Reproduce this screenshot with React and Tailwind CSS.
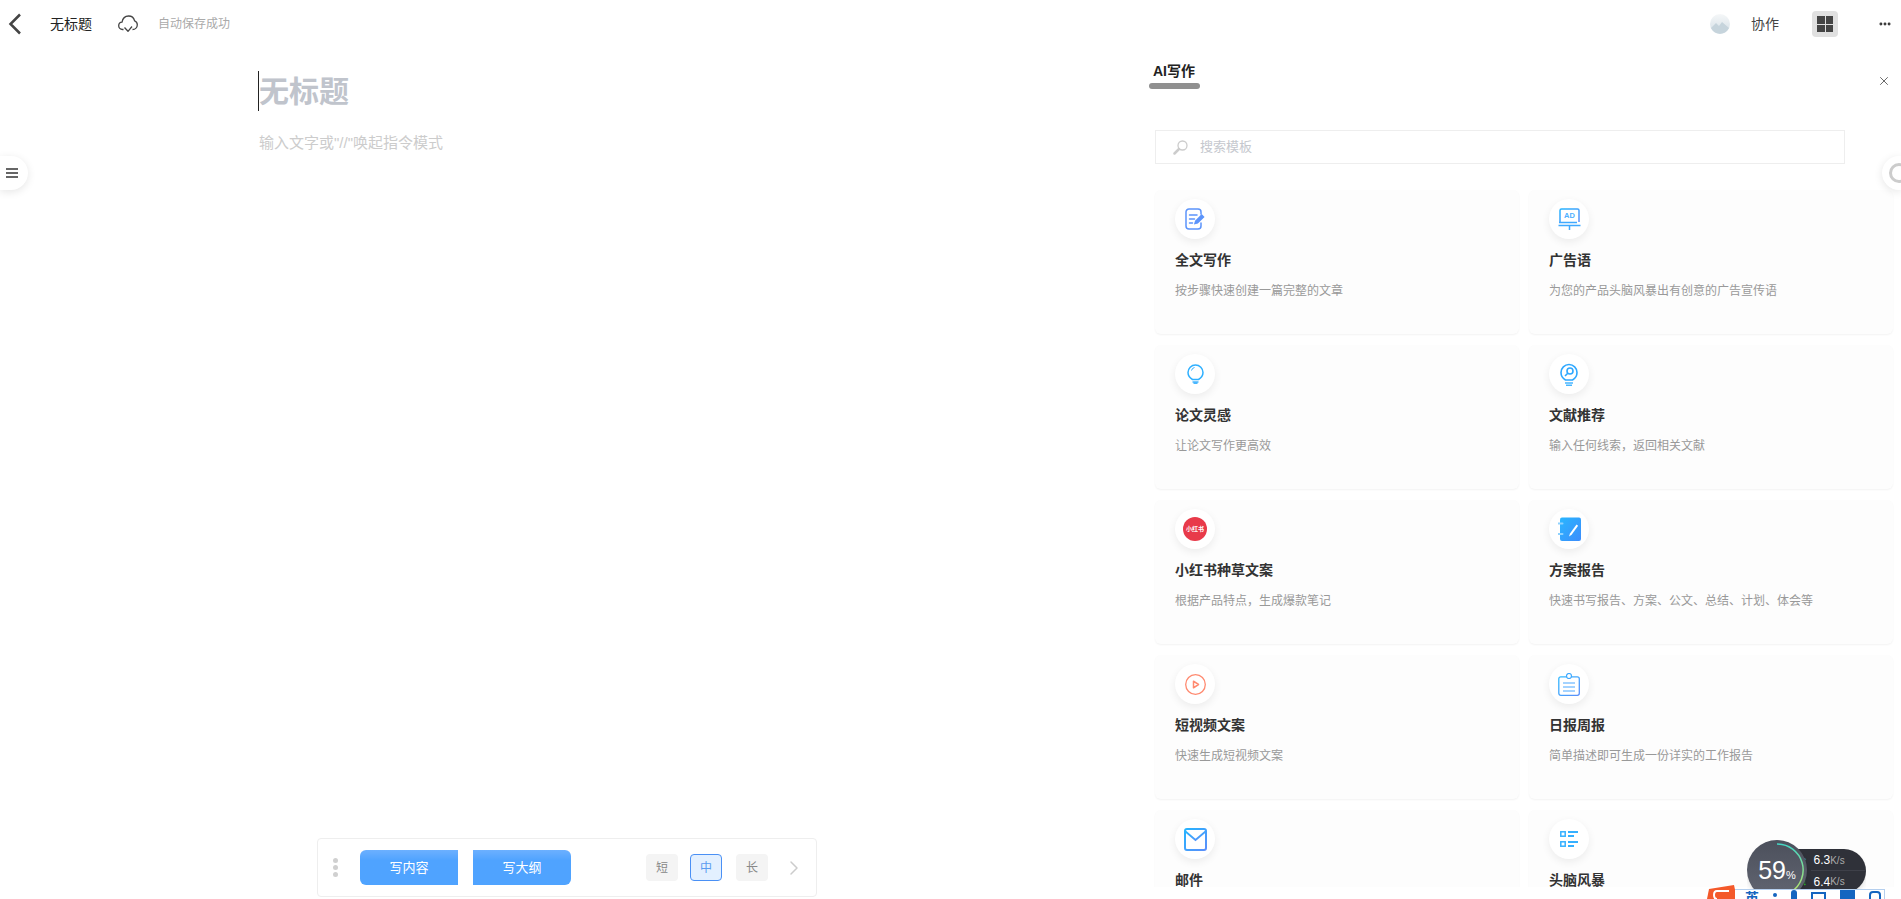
import { X, ChevronRight, MoreHorizontal } from "lucide-react";

const cards = [
  { id: "doc", title: "全文写作", desc: "按步骤快速创建一篇完整的文章" },
  { id: "ad", title: "广告语", desc: "为您的产品头脑风暴出有创意的广告宣传语" },
  { id: "bulb", title: "论文灵感", desc: "让论文写作更高效" },
  { id: "search", title: "文献推荐", desc: "输入任何线索，返回相关文献" },
  { id: "xhs", title: "小红书种草文案", desc: "根据产品特点，生成爆款笔记" },
  { id: "note", title: "方案报告", desc: "快速书写报告、方案、公文、总结、计划、体会等" },
  { id: "play", title: "短视频文案", desc: "快速生成短视频文案" },
  { id: "clip", title: "日报周报", desc: "简单描述即可生成一份详实的工作报告" },
  { id: "mail", title: "邮件", desc: "" },
  { id: "list", title: "头脑风暴", desc: "" },
];

function Grad({ id, from = "#26b4ff", to = "#5b8ffa" }) {
  return (
    <defs>
      <linearGradient id={id} x1="0" y1="0" x2="1" y2="1">
        <stop offset="0" stopColor={from} />
        <stop offset="1" stopColor={to} />
      </linearGradient>
    </defs>
  );
}

function CardIcon({ id }) {
  if (id === "doc")
    return (
      <svg width="20" height="22" viewBox="0 0 20 22" fill="none" stroke="#5c94fb" strokeWidth="1.5" strokeLinecap="round">
        <path d="M16 6V4a3 3 0 0 0-3-3H4a3 3 0 0 0-3 3v14a3 3 0 0 0 3 3h9a3 3 0 0 0 3-3v-3" />
        <path d="M4.5 7h7.5M4.5 11h5M4.5 15h3" />
        <path d="M10 15.5l.7-2.4 6-6 1.8 1.8-6 6z" fill="#5c94fb" />
      </svg>
    );
  if (id === "ad")
    return (
      <svg width="23" height="22" viewBox="0 0 23 22" fill="none">
        <Grad id="g-ad" />
        <path d="M2 14V2.5A1.5 1.5 0 0 1 3.500 1h16A1.500 1.500 0 0 1 21 2.500V14" stroke="url(#g-ad)" strokeWidth="1.500" />
        <path d="M1 14.500h18M0.500 17.500h22M11.500 17.500V22" stroke="#3fa9ff" strokeWidth="1.500" />
        <text x="11.500" y="10" textAnchor="middle" fontSize="7.500" fontWeight="700" fill="#4fb0ff" fontFamily="Liberation Sans">AD</text>
      </svg>
    );
  if (id === "bulb")
    return (
      <svg width="17" height="20" viewBox="0 0 17 20" fill="none" stroke="#2fb0ff" strokeWidth="1.500">
        <path d="M5.500 15.500C3 14 1 11.500 1 8.500a7.500 7.500 0 0 1 15 0c0 3-2 5.500-4.500 7z" />
        <path d="M4.500 6.500A4 4 0 0 1 7.500 3.500" strokeWidth="1" />
        <path d="M5.500 18h6M6.500 19.500h4" stroke="#49b7ff" strokeWidth="1.500" />
      </svg>
    );
  if (id === "search")
    return (
      <svg width="18" height="23" viewBox="0 0 18 23" fill="none" stroke="#2fa8ff" strokeWidth="1.600">
        <path d="M5.500 17C3 15.500 1 13 1 9.500a8 8 0 0 1 16 0c0 3.500-2 6-4.500 7.500z" />
        <circle cx="10" cy="8" r="3" />
        <path d="M7.800 10.200L5 13" />
        <path d="M5 20h8M6 22.200h6" stroke="#49b7ff" />
      </svg>
    );
  if (id === "xhs")
    return (
      <div className="w-6 h-6 rounded-full bg-[#e83a4a] flex items-center justify-center text-white text-[6px] font-bold leading-none whitespace-nowrap">
        小红书
      </div>
    );
  if (id === "note")
    return (
      <svg width="23" height="24" viewBox="0 0 23 24" fill="none">
        <Grad id="g-note" from="#29b6ff" to="#3d8dfc" />
        <rect x="2" y="0.500" width="21" height="23.500" rx="2" fill="url(#g-note)" />
        <path d="M0.500 6.500h4M0.500 17h4" stroke="#8ed2ff" strokeWidth="2" strokeLinecap="round" />
        <path d="M11 19.500l1-3 6.500-9 1.600 1.200-6.500 9z" fill="#fff" />
      </svg>
    );
  if (id === "play")
    return (
      <svg width="21" height="21" viewBox="0 0 21 21" fill="none" stroke="#ff8a70" strokeWidth="1.300">
        <circle cx="10.500" cy="10.500" r="9.800" />
        <path d="M8.500 7.200l5 3.300-5 3.300z" strokeWidth="1.500" strokeLinejoin="round" />
      </svg>
    );
  if (id === "clip")
    return (
      <svg width="22" height="23" viewBox="0 0 22 23" fill="none">
        <Grad id="g-clip" from="#2fb8ff" to="#5b8ffa" />
        <rect x="0.800" y="3.800" width="20.500" height="18.500" rx="2" stroke="url(#g-clip)" strokeWidth="1.300" />
        <path d="M5 10h12M5 14h12M5 18h12" stroke="#4aa8ff" strokeWidth="1.100" />
        <circle cx="11" cy="3" r="2.500" fill="#fff" stroke="#3fa9ff" strokeWidth="1.200" />
      </svg>
    );
  if (id === "mail")
    return (
      <svg width="23" height="23" viewBox="0 0 23 23" fill="none">
        <Grad id="g-mail" />
        <rect x="1" y="1" width="21" height="21" rx="2" stroke="url(#g-mail)" strokeWidth="2" />
        <path d="M1.500 3.500l10 8.500 10-8.500" stroke="url(#g-mail)" strokeWidth="1.800" />
      </svg>
    );
  return (
    <svg width="18" height="16" viewBox="0 0 18 16" fill="none" stroke="#35b0ff">
      <rect x="0.800" y="0.800" width="4.400" height="4.400" strokeWidth="1.500" />
      <rect x="0.800" y="10.800" width="4.400" height="4.400" strokeWidth="1.500" />
      <path d="M8 1h10M8 5h6M8 11h10M8 15h6" strokeWidth="1.800" />
    </svg>
  );
}

function TemplateCard({ id, title, desc }) {
  return (
    <div className="h-[144px] rounded-md bg-[#fdfdfd] pt-[9px] pl-5 shadow-[0_1px_2px_rgba(0,0,0,0.05)]">
      <div className="w-10 h-10 rounded-full bg-white shadow-[0_3px_8px_rgba(0,0,0,0.07)] flex items-center justify-center">
        <CardIcon id={id} />
      </div>
      <div className="mt-[11px] text-sm leading-5 font-bold text-[#333]">{title}</div>
      <div className="mt-[12px] text-xs leading-[18px] text-[#999]">{desc}</div>
    </div>
  );
}

function Header() {
  return (
    <header className="h-12 flex items-center shrink-0">
      <svg className="ml-[8px]" width="14" height="22" viewBox="0 0 14 22" fill="none" stroke="#444" strokeWidth="2.500">
        <path d="M12 1.500L2.500 11l9.500 9.500" />
      </svg>
      <span className="ml-[28px] text-sm text-[#222]">无标题</span>
      <svg className="ml-[26px]" width="20" height="18" viewBox="0 0 20 18" fill="none" stroke="#444" strokeWidth="1.300" strokeLinejoin="round">
        <path d="M5.500 14.500H4.500C2.300 14.500 0.700 12.800 0.700 10.800 0.700 8.800 2.200 7.300 4 7.200 4.600 3.700 7.200 1 10.600 1c3 0 5.300 2 6 4.800 1.500 0.500 2.700 2 2.700 3.900 0 2.600-2 4.800-4.800 4.800" />
        <path d="M6.500 12.500l3.500 3.800 4-4.800" />
      </svg>
      <span className="ml-[20px] text-xs text-[#aaa]">自动保存成功</span>
      <div className="ml-auto flex items-center">
        <svg width="20" height="20" viewBox="0 0 20 20">
          <defs>
            <linearGradient id="g-av" x1="0" y1="0" x2="0" y2="1">
              <stop offset="0" stopColor="#f5f7f8" />
              <stop offset="1" stopColor="#d4dfe6" />
            </linearGradient>
          </defs>
          <circle cx="10" cy="10" r="10" fill="url(#g-av)" />
          <path d="M1 14l5-5 3 3 3-4 7 6a10 10 0 0 1-18 0z" fill="#c6d4dc" />
        </svg>
        <span className="ml-[21px] text-sm text-[#444]">协作</span>
        <div className="ml-[33px] w-[26px] h-[26px] rounded-sm bg-[#e0e0e0] grid grid-cols-2 gap-px p-[5px]">
          <div className="bg-[#444]" />
          <div className="bg-[#444]" />
          <div className="bg-[#444]" />
          <div className="bg-[#444]" />
        </div>
        <MoreHorizontal className="ml-[40px] mr-[9px]" size={14} color="#333" strokeWidth={3} />
      </div>
    </header>
  );
}

function BottomBar() {
  return (
    <div className="absolute left-[317px] top-[838px] w-[500px] h-[59px] bg-white border border-[#eee] rounded-sm flex items-center">
      <div className="ml-[15px] flex flex-col gap-[2px]">
        <span className="w-[5px] h-[5px] rounded-full bg-[#d0d0d0]" />
        <span className="w-[5px] h-[5px] rounded-full bg-[#d0d0d0]" />
        <span className="w-[5px] h-[5px] rounded-full bg-[#d0d0d0]" />
      </div>
      <button className="ml-[22px] w-[98px] h-[35px] rounded-l-md bg-gradient-to-b from-[#6cb0ff] to-[#4fa3ff] to-30% text-[13px] text-white">写内容</button>
      <button className="ml-[15px] w-[98px] h-[35px] rounded-r-md bg-gradient-to-b from-[#6cb0ff] to-[#4fa3ff] to-30% text-[13px] text-white">写大纲</button>
      <button className="ml-[75px] w-8 h-[27px] rounded-sm bg-[#f4f4f4] text-xs text-[#888]">短</button>
      <button className="ml-[12px] w-8 h-[27px] rounded-sm bg-[#e3f0ff] border border-[#4a90f5] text-xs text-[#5a9bf0]">中</button>
      <button className="ml-[14px] w-8 h-[27px] rounded-sm bg-[#f4f4f4] text-xs text-[#888]">长</button>
      <ChevronRight className="ml-[14px]" size={24} color="#ccc" strokeWidth={1.500} />
    </div>
  );
}

function NetWidget() {
  return (
    <div className="absolute left-[1747px] top-[840px] w-[119px] h-[59px] overflow-hidden">
      <div className="absolute left-[30px] top-[9px] w-[89px] h-[44px] rounded-r-full bg-[#2f3139] shadow-md flex flex-col justify-center pl-[34px] text-white">
        <div className="h-[21px] flex items-center border-b border-[#3e4049]">
          <span className="text-[11px] text-[#3aa6f0] mr-[6px] -ml-[9px]">↑</span>
          <span className="text-xs">6.3</span>
          <span className="text-[10px] text-[#aaa]">K/s</span>
        </div>
        <div className="h-[21px] flex items-center">
          <span className="text-[11px] text-[#2bb52b] mr-[6px] -ml-[9px]">↓</span>
          <span className="text-xs">6.4</span>
          <span className="text-[10px] text-[#aaa]">K/s</span>
        </div>
      </div>
      <div className="absolute left-0 top-0 w-[60px] h-[60px] rounded-full bg-gradient-to-b from-[#4c505c] to-[#626672] shadow-md flex items-center justify-center text-white font-light">
        <span className="text-[25px] leading-none">59</span>
        <span className="text-[11px] leading-none mt-[10px]">%</span>
        <svg className="absolute inset-0" width="60" height="60" viewBox="0 0 60 60" fill="none">
          <defs>
            <linearGradient id="g-ring" x1="0" y1="0" x2="0" y2="1">
              <stop offset="0" stopColor="#43d6c4" />
              <stop offset="1" stopColor="#b6e36a" />
            </linearGradient>
          </defs>
          <path d="M30 4a26 26 0 0 1 14 48" stroke="url(#g-ring)" strokeWidth="1.500" />
        </svg>
      </div>
    </div>
  );
}

function ImeBar() {
  return (
    <>
      <svg className="absolute left-[1707px] top-[885px]" width="30" height="14" viewBox="0 0 30 14">
        <path d="M2 4L27 0l3 14H0z" fill="#f4592a" />
        <path d="M22 6H10q-3 0-3 4t3 4" fill="none" stroke="#fff" strokeWidth="2" />
      </svg>
      <div className="absolute left-[1735px] top-[889px] w-[150px] h-[10px] bg-white border-t border-r border-[#b5cfee] overflow-hidden flex items-start gap-[14px] pl-[10px] text-[#1565c0] text-sm font-bold leading-none">
        <span className="mt-[1px]">英</span>
        <span className="w-1 h-1 mt-[3px] rounded-full bg-[#1565c0]" />
        <span className="w-[6px] h-3 rounded-full bg-[#1565c0]" />
        <span className="w-[15px] h-3 mt-[2px] border-2 border-[#1565c0]" />
        <span className="w-[15px] h-3 bg-[#1565c0]" />
        <span className="w-3 h-3 mt-[1px] border-2 border-[#1565c0] rounded-sm" />
      </div>
    </>
  );
}

export default function App() {
  return (
    <div className="relative w-[1901px] h-[899px] overflow-hidden bg-white font-['Liberation_Sans','Noto_Sans_CJK_SC',sans-serif]">
      <Header />
      <div className="flex h-[839px] overflow-hidden">
        {/* editor */}
        <div className="w-[1149px] shrink-0 pl-[259px] pt-[23px]">
          <div className="h-10 border-l border-[#222] -ml-px text-[30px] leading-[42px] font-bold text-[#c0c4cc] whitespace-nowrap">无标题</div>
          <div className="mt-[20px] text-[15px] leading-6 text-[#ccc]">输入文字或"//"唤起指令模式</div>
        </div>
        {/* AI panel */}
        <div className="flex-1 relative">
          <div className="w-[51px] pt-[13px]">
            <div className="pl-[4px] text-sm leading-5 font-bold text-[#222] whitespace-nowrap">AI写作</div>
            <div className="mt-[2px] h-[6px] rounded-full bg-[#909090]" />
          </div>
          <X className="absolute right-[10px] top-[26px]" size={14} color="#555" strokeWidth={1.500} />
          <div className="ml-[6px] mt-[41px] w-[690px] h-[34px] border border-[#eee] flex items-center pl-[17px]">
            <svg width="15" height="15" viewBox="0 0 15 15" fill="none" stroke="#ccc" strokeWidth="1.300">
              <circle cx="9.500" cy="5.500" r="4.500" />
              <path d="M6 9l-4.500 4.500" strokeWidth="2.500" strokeLinecap="round" />
            </svg>
            <span className="ml-[12px] text-[13px] text-[#c5c8ce]">搜索模板</span>
          </div>
          <div className="ml-[6px] mt-[26px] w-[738px] grid grid-cols-2 gap-x-[10px] gap-y-[11px]">
            {cards.map((c) => (
              <TemplateCard key={c.id} {...c} />
            ))}
          </div>
        </div>
      </div>

      {/* sidebar toggles */}
      <div className="absolute left-0 top-[156px] w-[28px] h-[34px] rounded-r-full bg-white shadow-[0_2px_8px_rgba(0,0,0,0.1)] flex flex-col justify-center gap-[2px] pl-[6px]">
        <span className="w-3 h-[2px] bg-[#666]" />
        <span className="w-3 h-[2px] bg-[#666]" />
        <span className="w-3 h-[2px] bg-[#666]" />
      </div>
      <div className="absolute left-[1882px] top-[156px] w-[19px] h-[34px] rounded-l-full bg-white shadow-[0_2px_8px_rgba(0,0,0,0.1)] overflow-hidden">
        <div className="absolute left-[7px] top-[7px] w-5 h-5 rounded-full border-[3px] border-[#ccc]" />
      </div>

      <BottomBar />
      <NetWidget />
      <ImeBar />
    </div>
  );
}
